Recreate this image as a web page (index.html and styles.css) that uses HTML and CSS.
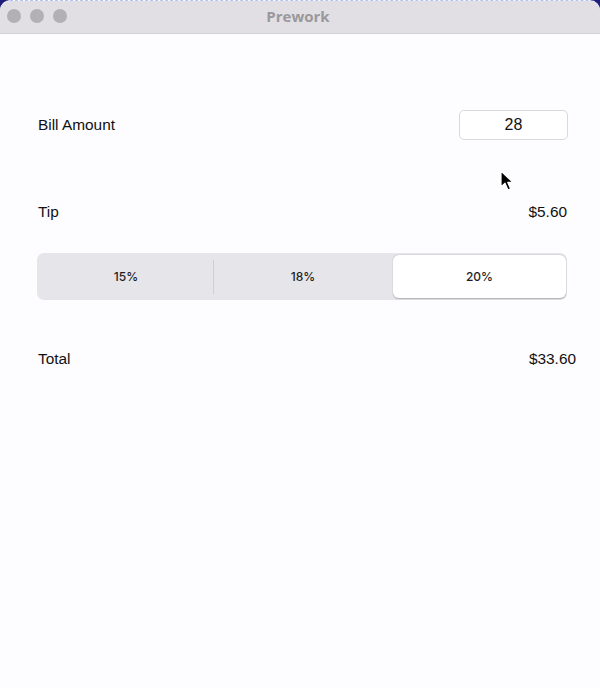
FILE: index.html
```html
<!DOCTYPE html>
<html>
<head>
<meta charset="utf-8">
<link rel="stylesheet" href="styles.css">
</head>
<body>
<div class="window">
  <div class="titlebar">
    <div class="lights">
      <span class="light"></span><span class="light"></span><span class="light"></span>
    </div>
    <div class="title">Prework</div>
  </div>
  <div class="content">
    <div class="row bill">
      <span class="label">Bill Amount</span>
      <div class="field">28</div>
    </div>
    <div class="row tip">
      <span class="label">Tip</span>
      <span class="value">$5.60</span>
    </div>
    <div class="segmented">
      <div class="seg">15%</div>
      <div class="seg divided">18%</div>
      <div class="seg selected">20%</div>
    </div>
    <div class="row total">
      <span class="label">Total</span>
      <span class="value">$33.60</span>
    </div>
  </div>
  <svg class="cursor" width="14" height="22" viewBox="0 0 14 22">
    <path d="M1 1 L1 17 L5 13.2 L8 20 L10.6 18.8 L7.8 12.4 L13 12.4 Z" fill="#000" stroke="#fff" stroke-width="1.2" stroke-linejoin="round"/>
  </svg>
</div>
</body>
</html>
```
FILE: styles.css
```css
html, body {
  margin: 0;
  padding: 0;
  width: 600px;
  height: 688px;
  background: #1f1d78;
  overflow: hidden;
}
.window {
  position: relative;
  width: 600px;
  height: 688px;
  background: #fdfcfe;
  border-radius: 10px 10px 0 0;
  border-top: 1px dashed #b4c3f4;
  box-sizing: border-box;
  overflow: hidden;
  font-family: "Liberation Sans", Arial, sans-serif;
  color: #111;
}
.titlebar {
  position: relative;
  height: 32px;
  background: #e1dfe3;
  border-bottom: 1px solid #d3d1d5;
  display: flex;
  align-items: center;
  justify-content: center;
}
.lights {
  position: absolute;
  left: 7px;
  top: 8px;
  display: flex;
  gap: 9px;
}
.light {
  width: 14px;
  height: 14px;
  border-radius: 50%;
  background: #b2b0b4;
}
.title {
  font-family: "Open Sans", "Liberation Sans", sans-serif;
  font-weight: 700;
  font-size: 15px;
  color: #9a989c;
  margin-left: -4px;
  margin-top: -2px;
}
.content {
  display: flex;
  flex-direction: column;
  padding: 0 33px 0 38px;
}
.row {
  display: flex;
  justify-content: space-between;
  align-items: center;
  font-size: 15.4px;
}
.bill {
  margin-top: 76px;
  height: 30px;
}
.field {
  width: 107px;
  height: 28px;
  border: 1px solid #d9d8dc;
  border-radius: 5px;
  background: #fff;
  display: flex;
  align-items: center;
  justify-content: center;
  font-size: 16px;
  margin-right: -1px;
}
.tip {
  margin-top: 63px;
  height: 18px;
}
.segmented {
  margin-top: 32px;
  margin-left: -1px;
  height: 47px;
  box-sizing: border-box;
  background: #e6e5ea;
  border-radius: 7px;
  padding: 2px 1px 2px 2px;
  display: grid;
  grid-template-columns: 174px 180px 173px;
}
.seg {
  display: flex;
  align-items: center;
  justify-content: center;
  font-family: "Inter", "Liberation Sans", sans-serif;
  font-size: 12px;
  font-weight: 500;
  color: #1d1d1f;
  position: relative;
}
.divided::before {
  content: "";
  position: absolute;
  left: 0;
  top: 5px;
  bottom: 4px;
  width: 1px;
  background: #cfced3;
}
.selected {
  background: #fff;
  border-radius: 6px;
  box-shadow: 0 0.5px 1.5px rgba(0,0,0,0.25);
}
.total {
  margin-top: 50px;
  height: 18px;
  margin-right: -9px;
}
.cursor {
  position: absolute;
  left: 500px;
  top: 169px;
}
```
